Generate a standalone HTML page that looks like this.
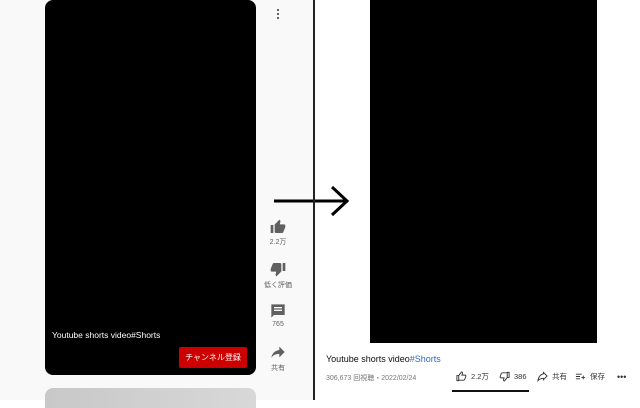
<!DOCTYPE html>
<html><head><meta charset="utf-8"><style>
*{margin:0;padding:0;box-sizing:border-box}
body{width:640px;height:400px;overflow:hidden;background:#fff;font-family:"Liberation Sans","Noto Sans CJK JP",sans-serif;position:relative}
.a{position:absolute}
.lbl{font-size:7px;color:#606060;text-align:center;width:40px}
</style></head><body>
<div class="a" style="left:0;top:0;width:314px;height:400px;background:#f9f9f9"></div>
<div class="a" style="left:45px;top:0;width:211px;height:375px;background:#000;border-radius:8px"></div>
<div class="a" style="left:52px;top:330px;color:#fff;font-size:8.5px">Youtube shorts video#Shorts</div>
<div class="a" style="left:179px;top:347px;width:68px;height:21px;background:#cc0000;border-radius:2px;color:#fff;font-size:8px;text-align:center;line-height:21px">チャンネル登録</div>
<div class="a" style="left:45px;top:388px;width:211px;height:20px;background:linear-gradient(90deg,#c8c8c8,#d8d8d8);border-radius:8px 8px 0 0"></div>
<div class="a" style="left:277px;top:8px;width:2px;height:12px;background:radial-gradient(circle,#333 0.8px,transparent 1px) 0 0/2px 4px"></div>
<svg class="a" style="left:270px;top:219px" width="16" height="16" viewBox="0 0 24 24"><path fill="#606060" d="M1 21h4V9H1v12zm22-11c0-1.1-.9-2-2-2h-6.3l1-4.6c0-.3 0-.6-.3-.9L14.2 1 7.6 7.6C7.2 8 7 8.5 7 9v10c0 1.1.9 2 2 2h9c.8 0 1.5-.5 1.800-1.2l3-7.1c.1-.2.2-.5.2-.7v-2z"/></svg>
<div class="a lbl" style="left:258px;top:237px">2.2万</div>
<svg class="a" style="left:270px;top:261px" width="16" height="16" viewBox="0 0 24 24"><path fill="#606060" d="M15 3H6c-.8 0-1.5.5-1.8 1.2l-3 7.1c-.1.2-.2.5-.2.7v2c0 1.1.9 2 2 2h6.3l-1 4.6c0 .3 0 .6.3.9L9.8 23l6.6-6.6c.4-.4.6-.9.6-1.4V5c0-1.1-.9-2-2-2zm4 0v12h4V3h-4z"/></svg>
<div class="a lbl" style="left:258px;top:280px">低く評価</div>
<svg class="a" style="left:270px;top:303px" width="16" height="16" viewBox="0 0 24 24"><path fill="#606060" d="M2 2h20v16H6l-4 4V2zm4 4v2h12V6H6zm0 4v2h12v-2H6z"/></svg>
<div class="a lbl" style="left:258px;top:321px">765</div>
<svg class="a" style="left:270px;top:344px" width="16" height="16" viewBox="0 0 24 24"><path fill="#606060" d="M14 9V4l8 8-8 8v-5c-6 0-10 2-12 6 1-6 4-11 12-12z"/></svg>
<div class="a lbl" style="left:258px;top:363px">共有</div>
<svg class="a" style="left:272px;top:185px" width="80" height="32" viewBox="0 0 80 32"><path d="M2 16H74M60 2L75 16L60 30" stroke="#000" stroke-width="3" fill="none"/></svg>
<div class="a" style="left:313px;top:0;width:2px;height:400px;background:#222"></div>
<div class="a" style="left:370px;top:0;width:227px;height:343px;background:#000"></div>
<div class="a" style="left:326px;top:354px;font-size:9px;color:#0f0f0f">Youtube shorts video<span style="color:#3366cc">#Shorts</span></div>
<div class="a" style="left:326px;top:373px;font-size:7px;color:#777">306,673 回視聴・2022/02/24</div>
<div class="a" style="left:456px;top:371px;font-size:7.5px;color:#333;display:flex;align-items:center;gap:4px">
<svg width="11" height="11" viewBox="0 0 24 24"><path fill="none" stroke="#333" stroke-width="2" d="M2 10h4v11H2zM6 10l6-8c1.5 0 2.5 1 2 3l-1 4h7c1 0 2 1 1.5 2.5l-2.5 7c-.4 1-1 1.5-2 1.5H6"/></svg>2.2万</div>
<div class="a" style="left:499px;top:371px;font-size:7.5px;color:#333;display:flex;align-items:center;gap:4px">
<svg width="11" height="11" viewBox="0 0 24 24"><path fill="none" stroke="#333" stroke-width="2" d="M22 14h-4V3h4zM18 14l-6 8c-1.5 0-2.5-1-2-3l1-4H4c-1 0-2-1-1.5-2.5l2.5-7C5.4 4.5 6 4 7 4h11"/></svg>386</div>
<div class="a" style="left:537px;top:371px;font-size:7.5px;color:#333;display:flex;align-items:center;gap:4px">
<svg width="11" height="11" viewBox="0 0 24 24"><path fill="none" stroke="#333" stroke-width="2" d="M14 6V3l8 8-8 8v-3c-6 0-9 2-12 5 1-6 4-13 12-15z"/></svg>共有</div>
<div class="a" style="left:575px;top:371px;font-size:7.5px;color:#333;display:flex;align-items:center;gap:4px">
<svg width="11" height="11" viewBox="0 0 24 24"><path fill="none" stroke="#333" stroke-width="2" d="M2 7h13M2 12h9M2 17h9M14 14h8M18 10v8"/></svg>保存</div>
<div class="a" style="left:617px;top:372px;font-size:9px;color:#333">•••</div>
<div class="a" style="left:452px;top:390px;width:77px;height:2px;background:#111"></div>
</body></html>
